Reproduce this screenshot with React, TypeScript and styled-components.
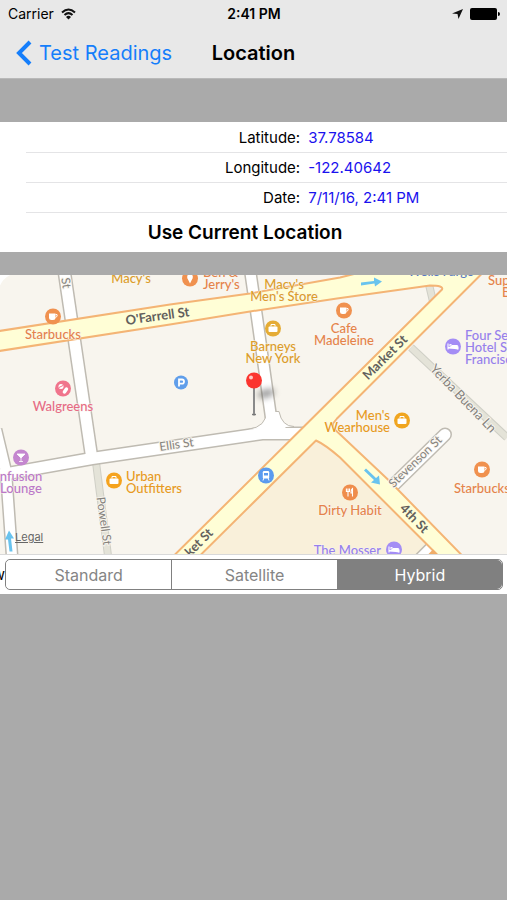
import React, { useState } from "react";
import styled, { createGlobalStyle } from "styled-components";

const GlobalStyle = createGlobalStyle`
  *, *::before, *::after { box-sizing: border-box; }
  html, body { margin: 0; min-height: 100%; background: #aaaaaa; }
  body { font-family: Inter, "Liberation Sans", sans-serif; color: #000; }
`;

const Header = styled.header`
  background: #e8e8e8;
  border-bottom: 1px solid #b9b9b9;
`;

const StatusBar = styled.div`
  display: grid;
  grid-template-columns: 1fr auto 1fr;
  align-items: center;
  height: 27px;
  padding: 0 7px 0 8px;
  font-size: 14px;
`;

const StatusGroup = styled.div<{ $end?: boolean }>`
  display: flex;
  align-items: center;
  gap: 7px;
  justify-content: ${(p) => (p.$end ? "flex-end" : "flex-start")};
`;

const Clock = styled.time`
  font-weight: 600;
`;

const NavBar = styled.nav`
  display: grid;
  grid-template-columns: 1fr auto 1fr;
  align-items: center;
  height: 51px;
  padding: 0 16px;
`;

const BackLink = styled.a`
  display: flex;
  align-items: center;
  gap: 7px;
  color: #157efb;
  font-size: 20px;
  text-decoration: none;
  white-space: nowrap;
`;

const Title = styled.h1`
  margin: 0;
  font-size: 20px;
  font-weight: 600;
`;

const Form = styled.form`
  margin: 43px 0 23px;
  padding-top: 1px;
  background: #fff;
`;

const Field = styled.div`
  display: grid;
  grid-template-columns: 57% 1fr;
  gap: 8px;
  align-items: center;
  height: 30px;
  margin-left: 26px;
  border-bottom: 1px solid #e4e4e6;
  font-size: 15px;
`;

const FieldLabel = styled.label`
  text-align: right;
`;

const FieldInput = styled.input`
  width: 100%;
  padding: 0;
  border: 0;
  outline: 0;
  background: transparent;
  color: #1a12ee;
  font: inherit;
`;

const LocationButton = styled.button`
  display: block;
  width: 100%;
  height: 39px;
  padding: 0 17px 0 0;
  border: 0;
  background: transparent;
  color: #000;
  font: inherit;
  font-size: 19px;
  font-weight: 600;
`;

const MapPanel = styled.section`
  position: relative;
  height: 280px;
  overflow: hidden;
  background: #f8f5ee;
  border-bottom: 1px solid #d9d9d9;
`;

const MapDrawing = styled.svg`
  display: block;
  width: 100%;
  height: 100%;
  font-family: Lato, "Open Sans", sans-serif;
`;

const LegalLink = styled.a`
  position: absolute;
  left: 15px;
  bottom: 10px;
  color: #666;
  font-size: 11px;
  line-height: 14px;
`;

const MapToolbar = styled.div`
  display: flex;
  align-items: center;
  padding: 4px 4px 4px 0;
  background: #fff;
`;

const ClippedLabel = styled.span`
  display: flex;
  justify-content: flex-end;
  width: 5px;
  overflow: hidden;
  font-size: 15px;
`;

const Segments = styled.fieldset`
  display: grid;
  flex: 1;
  grid-template-columns: repeat(3, 1fr);
  min-width: 0;
  height: 31px;
  margin: 0;
  padding: 0;
  overflow: hidden;
  border: 1px solid #808080;
  border-radius: 5px;
`;

const Segment = styled.label<{ $selected: boolean }>`
  position: relative;
  display: flex;
  align-items: center;
  justify-content: center;
  background: ${(p) => (p.$selected ? "#808080" : "#fff")};
  color: ${(p) => (p.$selected ? "#fff" : "#858585")};
  font-size: 16px;
  & + & { border-left: 1px solid #808080; }
`;

const SegmentRadio = styled.input`
  position: absolute;
  opacity: 0;
  pointer-events: none;
`;

type PoiKind = "cup" | "bag" | "pill" | "park" | "train" | "fork" | "bed" | "glass" | "cone";

interface Poi {
  kind: PoiKind;
  x: number;
  y: number;
  color: string;
}

interface MapText {
  lines: string[];
  x: number;
  y: number;
  color: string;
  anchor?: "start" | "middle" | "end";
}

const ORANGE = "#e5834a";
const GOLD = "#dc9d2b";
const AMBER = "#e79a22";
const PURPLE = "#9680ec";
const PINK = "#e66b85";
const VIOLET = "#bb78c8";

const pois: Poi[] = [
  { kind: "cup", x: 53, y: 317, color: "#f0914f" },
  { kind: "pill", x: 63, y: 389, color: "#f0748c" },
  { kind: "cone", x: 190, y: 279, color: "#f0914f" },
  { kind: "bag", x: 273, y: 329, color: "#e5ac35" },
  { kind: "park", x: 181, y: 383, color: "#609eea" },
  { kind: "cup", x: 344, y: 311, color: "#f0914f" },
  { kind: "bed", x: 453, y: 347, color: "#a48df5" },
  { kind: "bag", x: 402, y: 421, color: "#f0a51f" },
  { kind: "glass", x: 21, y: 458, color: "#c486cf" },
  { kind: "bag", x: 114, y: 481, color: "#f5a31e" },
  { kind: "train", x: 266, y: 476, color: "#5b9bef" },
  { kind: "fork", x: 350, y: 493, color: "#ef8d4c" },
  { kind: "cup", x: 482, y: 470, color: "#f0914f" },
  { kind: "bed", x: 394, y: 550, color: "#a48df5" },
];

const places: MapText[] = [
  { lines: ["Macy's"], x: 131, y: 283, color: GOLD },
  { lines: ["Ben &", "Jerry's"], x: 203, y: 277, color: ORANGE, anchor: "start" },
  { lines: ["Macy's", "Men's Store"], x: 284, y: 289, color: GOLD },
  { lines: ["Starbucks"], x: 53, y: 339, color: ORANGE },
  { lines: ["Barneys", "New York"], x: 273, y: 351, color: GOLD },
  { lines: ["Cafe", "Madeleine"], x: 344, y: 333, color: ORANGE },
  { lines: ["Walgreens"], x: 63, y: 411, color: PINK },
  { lines: ["Sup"], x: 488, y: 285, color: ORANGE, anchor: "start" },
  { lines: ["B"], x: 502, y: 297, color: ORANGE, anchor: "start" },
  { lines: ["Four Seasons", "Hotel San", "Francisco"], x: 465, y: 340, color: PURPLE, anchor: "start" },
  { lines: ["Men's", "Wearhouse"], x: 390, y: 420, color: AMBER, anchor: "end" },
  { lines: ["nfusion", "Lounge"], x: 21, y: 481, color: VIOLET },
  { lines: ["Urban", "Outfitters"], x: 126, y: 481, color: AMBER, anchor: "start" },
  { lines: ["Dirty Habit"], x: 350, y: 515, color: ORANGE },
  { lines: ["Starbucks"], x: 482, y: 493, color: ORANGE },
  { lines: ["The Mosser"], x: 381, y: 555, color: PURPLE, anchor: "end" },
];

const streets = [
  { name: "O'Farrell St", x: 158, y: 321, angle: -8, size: 13, major: true },
  { name: "Market St", x: 388, y: 361, angle: -45, size: 13, major: true },
  { name: "ket St", x: 202, y: 546, angle: -45, size: 13, major: true },
  { name: "4th St", x: 411, y: 522, angle: 46, size: 13, major: true },
  { name: "Ellis St", x: 177, y: 449, angle: -8, size: 12, major: false },
  { name: "Powell St", x: 100, y: 522, angle: 82, size: 12, major: false },
  { name: "Stevenson St", x: 418, y: 465, angle: -44, size: 12, major: false },
  { name: "Yerba Buena Ln", x: 460, y: 402, angle: 46, size: 13, major: false },
  { name: "St", x: 62, y: 284, angle: 82, size: 12, major: false },
];

function PoiGlyph({ kind }: { kind: PoiKind }) {
  switch (kind) {
    case "cup":
      return (
        <g>
          <path d="M-4-3H2.500V1Q2.500 3.500 0 3.500H-1.500Q-4 3.500-4 1Z" fill="#fff" />
          <path d="M2.500-2H4Q5 0 2.500 1" fill="none" stroke="#fff" />
        </g>
      );
    case "bag":
      return (
        <g>
          <rect x="-4.500" y="-2" width="9" height="5.500" rx="1" fill="#fff" />
          <path d="M-2-2V-4H2V-2" fill="none" stroke="#fff" />
        </g>
      );
    case "pill":
      return (
        <g fill="#fff">
          <circle cx="-2" cy="-2" r="2.500" />
          <rect x="-3.500" y="0" width="7" height="3.500" rx="1.700" transform="translate(1 1) rotate(-55)" />
          <path d="M-4-1L0-3" stroke="#f0748c" />
        </g>
      );
    case "park":
      return <path d="M-2 4V-3H1Q3-3 3-1Q3 1.200 1 1.200H-2" fill="none" stroke="#fff" strokeWidth="1.800" />;
    case "train":
      return (
        <g>
          <path d="M-3 5L-2 2M3 5L2 2" stroke="#fff" />
          <rect x="-3.200" y="-4.500" width="6.400" height="7.500" rx="1.300" fill="#fff" />
          <rect x="-2" y="-2.500" width="4" height="2.500" fill="#5b9bef" />
        </g>
      );
    case "fork":
      return (
        <path d="M-2 4V-4M-3.600-4V-1H-.500V-4M2.500 4V-4Q1 -3 1 .500H2.500" fill="none" stroke="#fff" strokeWidth="1.100" />
      );
    case "bed":
      return (
        <path d="M-5-3V3M-5 1.500H5V3M-3.500-1A1 1 0 0 1-1.500-1M-1-1H4Q5-1 5 1H-5" fill="#fff" stroke="#fff" strokeWidth="1.100" />
      );
    case "glass":
      return <path d="M-4-3.500H4L0 .500ZM0 0V4M-2 4H2" fill="#fff" stroke="#fff" strokeWidth=".8" />;
    case "cone":
      return (
        <g fill="#fff">
          <circle cx="0" cy="-1.500" r="2.800" />
          <path d="M-2.500 0H2.500L0 5Z" />
        </g>
      );
  }
}

function StreetMap() {
  return (
    <MapDrawing viewBox="0 275 507 280" preserveAspectRatio="xMidYMid slice" role="img" aria-label="Map of Market Street">
      <defs>
        <filter id="soft" x="-50%" y="-100%" width="200%" height="300%">
          <feGaussianBlur stdDeviation="3" />
        </filter>
      </defs>

      <path d="M316 441L340 458L427 545L434 555H202Z" fill="#f9f0da" />

      <g fill="none" strokeWidth="8" stroke="#cfcfc6">
        <path d="M96 463L108 556" />
        <path d="M411 348L507 438" />
        <path d="M429 285L433 302" />
        <g stroke="#e4e3d8" strokeWidth="6">
          <path d="M96 463L108 556" />
          <path d="M411 348L507 438" />
          <path d="M429 285L433 302" />
        </g>
      </g>

      <g fill="none" strokeLinejoin="round">
        <g stroke="#bfbbb2">
          <path d="M64 270L92 460" strokeWidth="14" />
          <path d="M250 270L257 318L273 432" strokeWidth="13" />
          <path d="M-4 476L92 459L262 434H310" strokeWidth="14" />
          <path d="M-4 430L6 472L12 556" strokeWidth="13" />
          <path d="M394 485L445 435" strokeWidth="14" strokeLinecap="round" />
          <path d="M416 564L438 542" strokeWidth="14" />
        </g>
        <path d="M248 430Q267 427 266 412L279 412Q282 427 294 427" fill="#fff" stroke="#bfbbb2" />
        <g stroke="#fff">
          <path d="M64 270L92 460" strokeWidth="11" />
          <path d="M250 270L257 318L273 432" strokeWidth="10" />
          <path d="M-4 476L92 459L262 434H310" strokeWidth="11" />
          <path d="M-4 430L6 472L12 556" strokeWidth="10" />
          <path d="M394 485L445 435" strokeWidth="11" strokeLinecap="round" />
          <path d="M416 564L438 542" strokeWidth="11" />
        </g>
        <path d="M254 430Q268 426 268 414L276 414Q281 428 290 430Z" fill="#fff" />
      </g>

      <path
        d="M-4 332L170 305L250 294L340 278L372 270H486L481 275L337 419L333 424Q332 428 337 432L390 482L466 560H442L425 543L340 458Q325 445 316 441L196 560H170L305 426L442 290Q444 286 430 286L337 299L250 312L170 325L-4 352Z"
        fill="#fffed6"
        stroke="#f4b475"
        strokeWidth="2"
        strokeLinejoin="round"
      />
      <path d="M427 556L433 550L439 556Z" fill="#f0ad69" />

      <g fill="#69c3ee">
        <path d="M361 283L374 281.500L374 278L382 282L375 287L374.500 284L361 286Z" />
        <path d="M366 469L376 478.500L379 476L380 485L371 483L374 480.500L364 471Z" />
        <path d="M9.500 552L8 540H5L9 531L14 539H11L12.500 552Z" />
      </g>

      {streets.map((s) => (
        <text
          key={s.name}
          transform={`translate(${s.x} ${s.y}) rotate(${s.angle})`}
          textAnchor="middle"
          fontSize={s.size}
          fontWeight={s.major ? 700 : 400}
          fill={s.major ? "#62605d" : "#85827d"}
          stroke={s.major ? "#fffed6" : "#f8f5ee"}
          strokeWidth="2"
          paintOrder="stroke"
        >
          {s.name}
        </text>
      ))}
      <text x="441" y="276" textAnchor="middle" fontSize="13" fontWeight="500" fill="#587ac5">
        Wells Fargo
      </text>

      {places.map((t) => (
        <text
          key={`${t.lines[0]}-${t.x}`}
          textAnchor={t.anchor ?? "middle"}
          fontSize="13"
          fontWeight="500"
          fill={t.color}
          stroke="#f9f6ef"
          strokeWidth="1"
          paintOrder="stroke"
        >
          {t.lines.map((line, i) => (
            <tspan key={line} x={t.x} y={t.y + i * 12}>
              {line}
            </tspan>
          ))}
        </text>
      ))}

      {pois.map((p) => (
        <g key={`${p.x}-${p.y}`} transform={`translate(${p.x} ${p.y})`}>
          <circle r={p.kind === "park" ? 7 : 8} fill={p.color} />
          <PoiGlyph kind={p.kind} />
        </g>
      ))}

      <ellipse cx="266" cy="394" rx="9" ry="4" fill="#555" opacity=".6" filter="url(#soft)" transform="rotate(-15 266 394)" />
      <ellipse cx="254" cy="415" rx="2" ry="1" fill="#666" />
      <path d="M254 388V415" stroke="#8a8a8a" strokeWidth="2" />
      <circle cx="254" cy="381" r="8" fill="#fb352f" />
      <circle cx="251" cy="378" r="2" fill="#ffc9c5" />
      <path d="M0 275H11Q3 279 0 286Z" fill="#fff" />
    </MapDrawing>
  );
}

function WifiIcon() {
  return (
    <svg width="15" height="12" viewBox="0 0 15 12" aria-hidden="true">
      <g fill="none" stroke="#111" strokeWidth="2">
        <path d="M1 4.500Q7.500-1.500 14 4.500" />
        <path d="M3.500 7Q7.500 3.300 11.500 7" />
      </g>
      <path d="M7.500 11.500L5 8.900Q7.500 6.800 10 8.900Z" fill="#111" />
    </svg>
  );
}

const mapTypes = ["Standard", "Satellite", "Hybrid"];

export default function App() {
  const [latitude, setLatitude] = useState("37.78584");
  const [longitude, setLongitude] = useState("-122.40642");
  const [date, setDate] = useState("7/11/16, 2:41 PM");
  const [mapType, setMapType] = useState("Hybrid");

  const fields = [
    { id: "latitude", label: "Latitude:", value: latitude, set: setLatitude },
    { id: "longitude", label: "Longitude:", value: longitude, set: setLongitude },
    { id: "date", label: "Date:", value: date, set: setDate },
  ];

  return (
    <>
      <GlobalStyle />
      <Header>
        <StatusBar>
          <StatusGroup>
            <span>Carrier</span>
            <WifiIcon />
          </StatusGroup>
          <Clock>2:41 PM</Clock>
          <StatusGroup $end>
            <svg width="11" height="10" viewBox="0 0 11 10" aria-hidden="true">
              <path d="M11 0L6.500 10L5.500 5L0 4.500Z" fill="#111" />
            </svg>
            <svg width="30" height="12" viewBox="0 0 30 12" aria-hidden="true">
              <rect width="27" height="12" rx="2" />
              <path d="M28 4Q30 4 30 6Q30 8 28 8Z" />
            </svg>
          </StatusGroup>
        </StatusBar>
        <NavBar>
          <BackLink href="#readings">
            <svg width="16" height="26" viewBox="0 0 16 26" aria-hidden="true">
              <path d="M14 2L3 13L14 24" fill="none" stroke="#157efb" strokeWidth="4" />
            </svg>
            Test Readings
          </BackLink>
          <Title>Location</Title>
        </NavBar>
      </Header>
      <main>
        <Form onSubmit={(e) => e.preventDefault()}>
          {fields.map((f) => (
            <Field key={f.id}>
              <FieldLabel htmlFor={f.id}>{f.label}</FieldLabel>
              <FieldInput id={f.id} value={f.value} onChange={(e) => f.set(e.target.value)} />
            </Field>
          ))}
          <LocationButton type="button">Use Current Location</LocationButton>
        </Form>
        <MapPanel>
          <StreetMap />
          <LegalLink href="#legal">Legal</LegalLink>
        </MapPanel>
        <MapToolbar>
          <ClippedLabel aria-hidden="true">w</ClippedLabel>
          <Segments aria-label="Map type">
            {mapTypes.map((type) => (
              <Segment key={type} $selected={mapType === type}>
                <SegmentRadio type="radio" name="map-type" checked={mapType === type} onChange={() => setMapType(type)} />
                {type}
              </Segment>
            ))}
          </Segments>
        </MapToolbar>
      </main>
    </>
  );
}
